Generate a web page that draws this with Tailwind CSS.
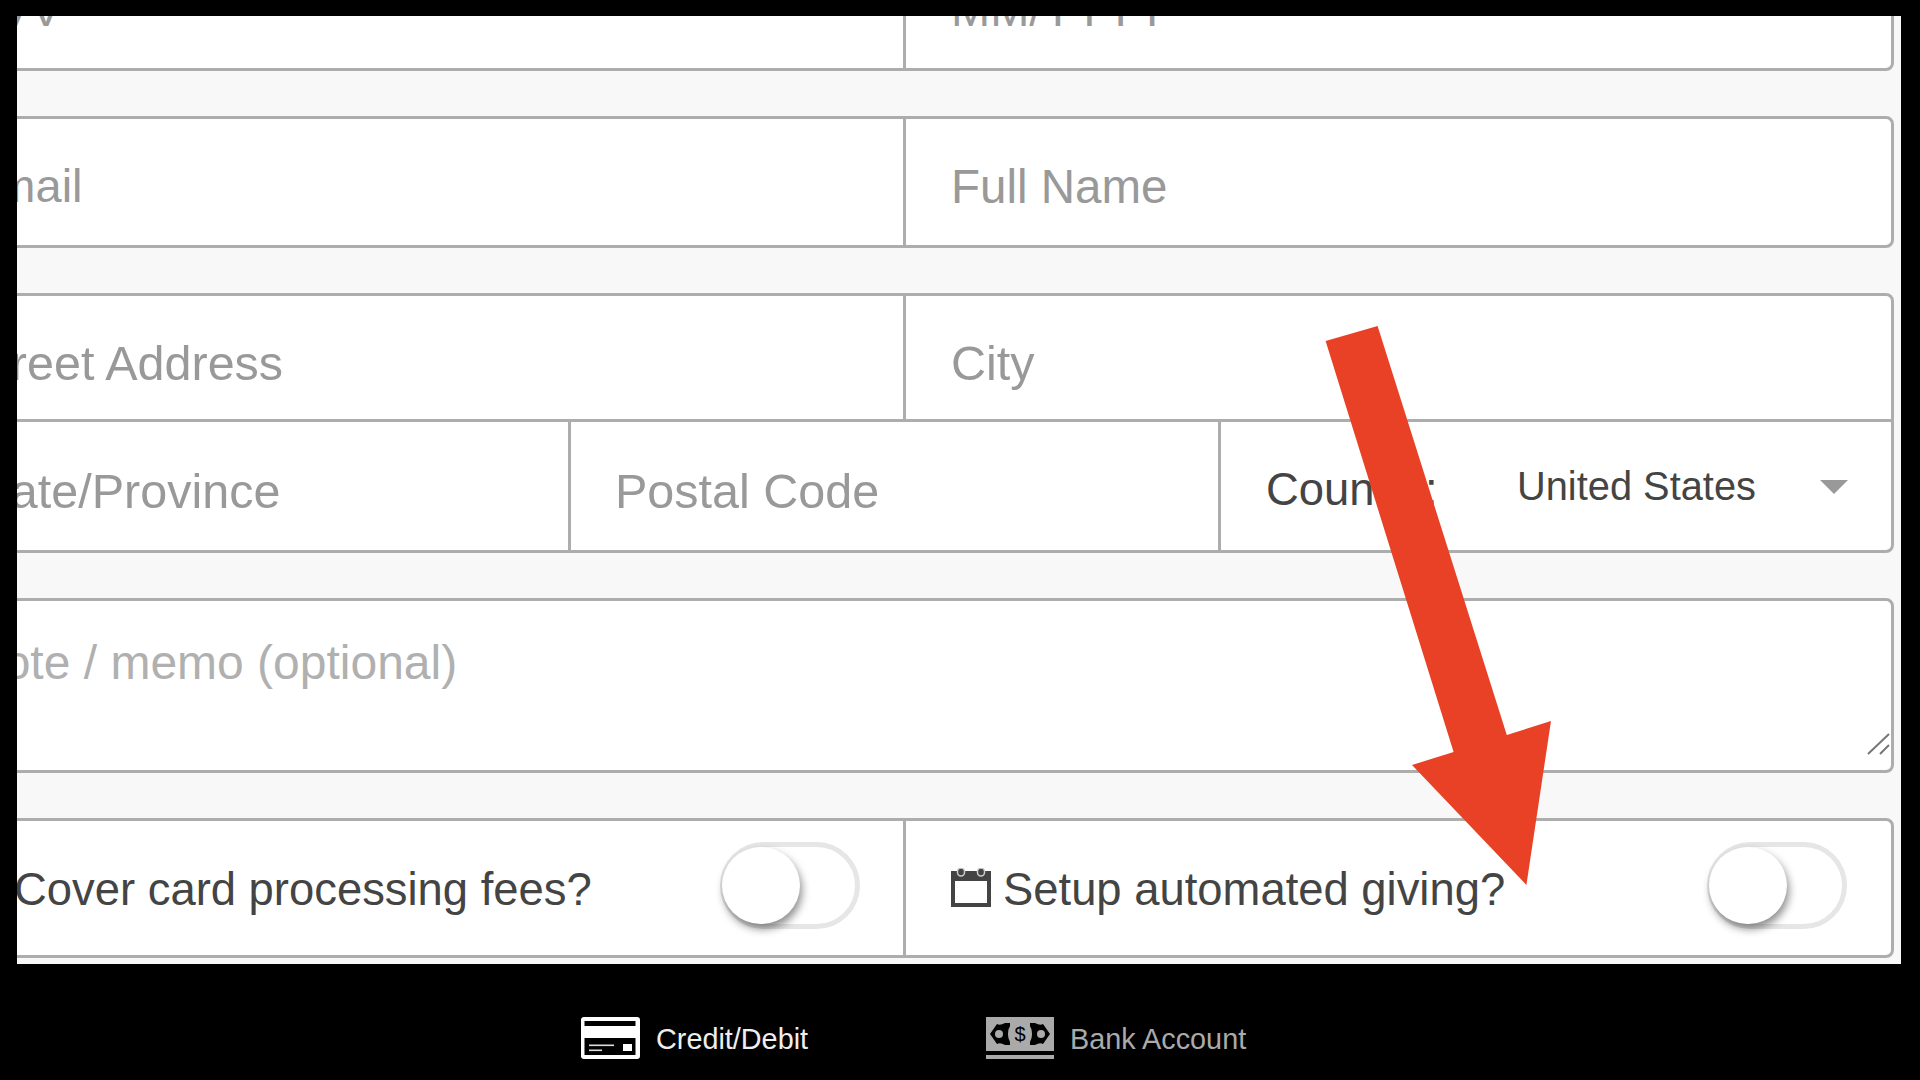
<!DOCTYPE html>
<html>
<head>
<meta charset="utf-8">
<script src="https://cdn.jsdelivr.net/npm/@tailwindcss/browser@4"></script>
</head>
<body class="bg-black font-['Liberation_Sans',Arial,sans-serif]">
<div class="relative w-[1920px] h-[1080px] overflow-hidden bg-black pt-[16px] pl-[17px]">
  <main class="w-[1884px] h-[948px] overflow-hidden bg-[#f8f8f8]">
    <form class="flex flex-col gap-[45px] w-[1977px] ml-[-100px] mt-[-91px] text-[48.5px] text-[#999]">
      <div class="flex h-[146px] bg-white border-[3px] border-[#adadad] rounded-[8px]">
        <div class="w-[983px] pl-[45px] pt-[25px] flex items-center text-[47px]">CVV</div>
        <div class="flex-1 border-l-[3px] border-[#adadad] pl-[45px] pt-[25px] flex items-center text-[47px]">MM/YYYY</div>
      </div>
      <div class="flex h-[132px] bg-white border-[3px] border-[#adadad] rounded-[8px]">
        <div class="w-[983px] pl-[45px] pt-[9px] flex items-center text-[47px]">Email</div>
        <div class="flex-1 border-l-[3px] border-[#adadad] pl-[45px] pt-[9px] flex items-center text-[47.5px]">Full Name</div>
      </div>
      <div class="flex flex-col h-[260px] bg-white border-[3px] border-[#adadad] rounded-[8px]">
        <div class="flex h-[126px] border-b-[3px] border-[#adadad]">
          <div class="w-[983px] pl-[45px] pt-[11px] flex items-center">Street Address</div>
          <div class="flex-1 border-l-[3px] border-[#adadad] pl-[45px] pt-[11px] flex items-center">City</div>
        </div>
        <div class="flex flex-1">
          <div class="w-[648px] pl-[45px] pt-[11px] flex items-center">State/Province</div>
          <div class="w-[650px] border-l-[3px] border-[#adadad] pl-[44px] pt-[11px] flex items-center">Postal Code</div>
          <div class="flex-1 border-l-[3px] border-[#adadad] pl-[45px] pt-[2px] flex items-center text-[#444]">
            <span class="text-[45.4px] w-[251px] pt-[6px]">Country:</span>
            <span class="text-[39.8px]">United States</span>
            <span class="ml-[64px] w-0 h-0 border-x-[14px] border-x-transparent border-t-[14px] border-t-[#999]"></span>
          </div>
        </div>
      </div>
      <div class="relative h-[175px] bg-white border-[3px] border-[#adadad] rounded-[8px] pl-[49px] pt-[26px] text-[#b0b0b0] text-[48px]">
        <span>Note / memo (optional)</span>
        <svg class="absolute right-[1px] bottom-[15px]" width="24" height="24" viewBox="0 0 24 24">
          <path d="M2 23 L23 3 M14 23 L23 14" stroke="#777" stroke-width="2" fill="none"/>
        </svg>
      </div>
      <div class="flex h-[140px] bg-white border-[3px] border-[#adadad] rounded-[8px] text-[45.4px] text-[#444]">
        <div class="w-[983px] pl-[94px] pr-[43px] flex items-center justify-between">
          <span class="pt-[4px]">Cover card processing fees?</span>
          <span class="relative w-[140px] h-[87px] rounded-full border-[5px] border-[#e6e6e6] mt-[-6px]">
            <span class="absolute left-[-3px] top-0 w-[78px] h-[77px] rounded-full bg-white shadow-[2px_5px_8px_rgba(0,0,0,0.45)]"></span>
          </span>
        </div>
        <div class="flex-1 border-l-[3px] border-[#adadad] pl-[45px] pr-[44px] flex items-center justify-between">
          <span class="flex items-center gap-[12px] pt-[4px]">
            <svg width="40" height="40" viewBox="0 0 40 40" class="mt-[-4px]">
              <path d="M0 3 H40 V39 H0 Z M4 13 V35 H36 V13 Z" fill="#444" fill-rule="evenodd"/>
              <rect x="6.5" y="0" width="7" height="8" rx="3.5" fill="#444" stroke="#ccc" stroke-width="1.5"/>
              <rect x="26.5" y="0" width="7" height="8" rx="3.5" fill="#444" stroke="#ccc" stroke-width="1.5"/>
            </svg>
            <span>Setup automated giving?</span>
          </span>
          <span class="relative w-[140px] h-[87px] rounded-full border-[5px] border-[#e6e6e6] mt-[-6px]">
            <span class="absolute left-[-3px] top-0 w-[78px] h-[77px] rounded-full bg-white shadow-[2px_5px_8px_rgba(0,0,0,0.45)]"></span>
          </span>
        </div>
      </div>
    </form>
  </main>
  <nav class="flex items-center pl-[564px] pt-[50px] gap-[178px] text-[28.8px]">
    <div class="flex items-center gap-[16px] text-[#eee]">
      <svg width="59" height="42" viewBox="0 0 59 42">
        <rect width="59" height="42" rx="3" fill="#fff"/>
        <rect x="3.5" y="4" width="51" height="5" fill="#000"/>
        <rect x="3.5" y="21" width="51" height="17" fill="#000"/>
        <rect x="8" y="27.5" width="25" height="1.6" fill="#ddd"/>
        <rect x="8" y="32.5" width="13" height="1.6" fill="#ddd"/>
        <rect x="42" y="27" width="9" height="7" fill="#fff"/>
      </svg>
      <span class="pt-[4px]">Credit/Debit</span>
    </div>
    <div class="flex items-center gap-[16px] text-[#aaa]">
      <svg width="68" height="42" viewBox="0 0 68 42">
        <rect width="68" height="34" fill="#aaa"/>
        <rect y="38" width="68" height="4" fill="#aaa"/>
        <path d="M4 17 L11 7 Q14 9 19 6 L24 6 V28 L19 28 Q14 25 11 27 Z M64 17 L57 7 Q54 9 49 6 L44 6 V28 L49 28 Q54 25 57 27 Z" fill="#000"/>
        <ellipse cx="34" cy="17" rx="12" ry="14" fill="#aaa"/>
        <circle cx="13" cy="17" r="4" fill="#aaa"/>
        <circle cx="55" cy="17" r="4" fill="#aaa"/>
        <text x="34" y="24" text-anchor="middle" font-size="20" font-family="Liberation Sans" fill="#000">$</text>
      </svg>
      <span class="pt-[4px]">Bank Account</span>
    </div>
  </nav>
  <svg class="absolute left-0 top-0 pointer-events-none" width="1920" height="1080" viewBox="0 0 1920 1080">
    <polygon points="1325.6,341 1377.6,326 1506.8,735 1551,721 1526.4,885 1412,765 1453.6,752" fill="#e94126"/>
  </svg>
</div>
</body>
</html>
